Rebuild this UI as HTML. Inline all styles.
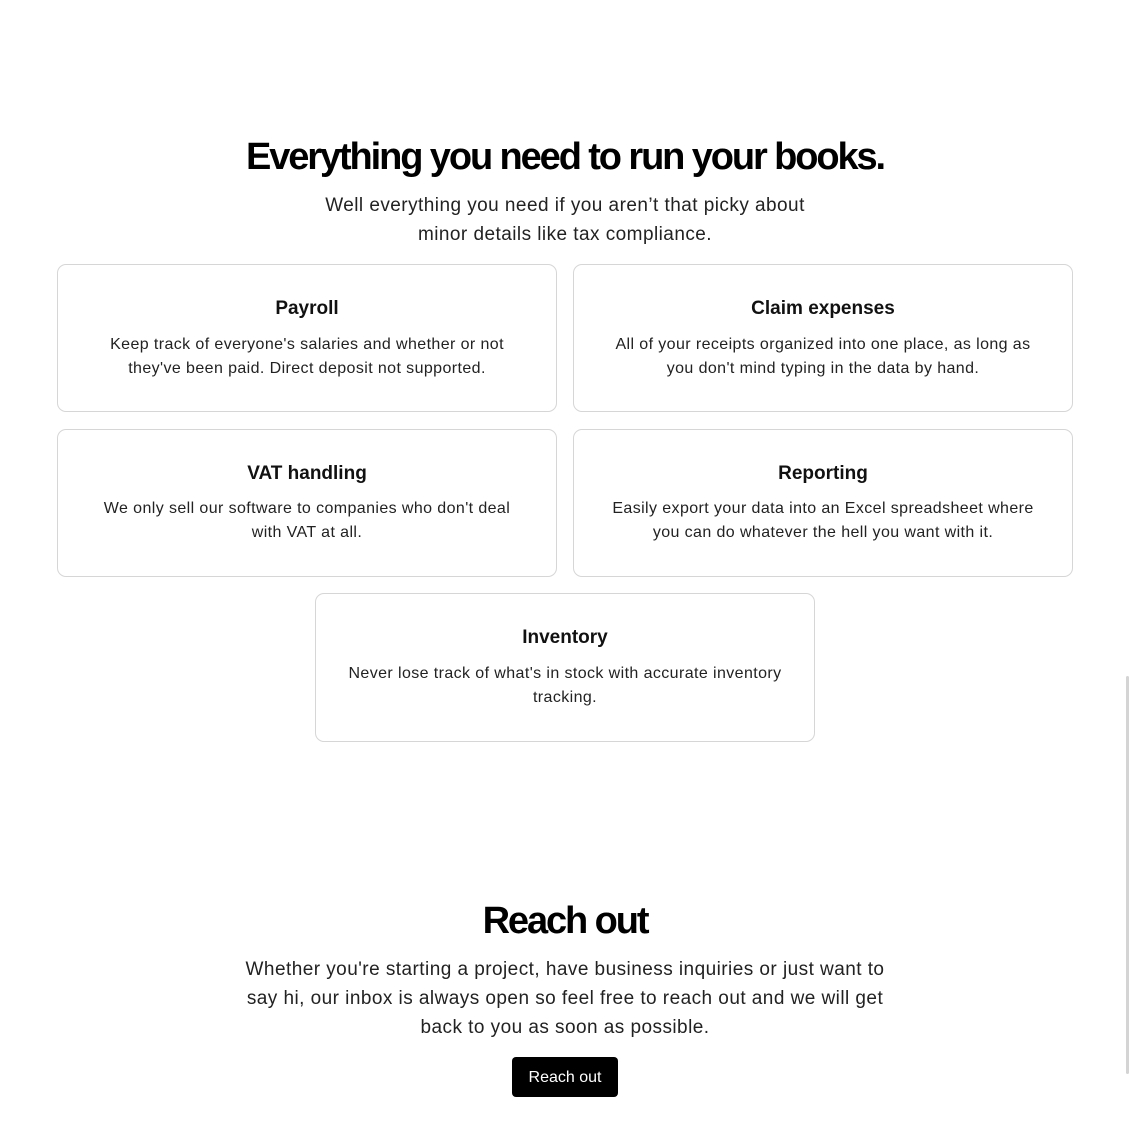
<!DOCTYPE html>
<html><head><meta charset="utf-8"><style>
*{box-sizing:border-box;margin:0;padding:0}
body{width:1130px;height:1130px;background:#fff;font-family:"Liberation Sans",Arial,sans-serif;color:#111;position:relative;overflow:hidden}
.abs{position:absolute;left:0;width:1130px;text-align:center}
h1{font-size:38px;font-weight:700;letter-spacing:-2.1px;color:#000}
.sub{font-size:19px;line-height:29px;color:#222;letter-spacing:0.45px}
.card{position:absolute;width:500px;height:148px;border:1px solid #d6d6d6;border-radius:9px;text-align:center}
.card h3{position:absolute;top:33px;left:0;right:0;font-size:19px;font-weight:700;color:#111}
.card p{position:absolute;top:68px;left:0;right:0;font-size:16px;line-height:24px;color:#222;letter-spacing:0.4px}
.btn{position:absolute;left:512px;top:1057px;width:106px;height:40px;background:#000;color:#fff;border-radius:4px;font-size:16px;line-height:41px;text-align:center}
.sb{position:absolute;left:1126px;top:676px;width:3px;height:398px;background:#d4d4d4;border-radius:2px}
</style></head><body>
<div class="abs" style="top:136px"><h1>Everything you need to run your books.</h1></div>
<div class="abs sub" style="top:191px">Well everything you need if you aren’t that picky about<br>minor details like tax compliance.</div>

<div class="card" style="left:57px;top:264px"><h3>Payroll</h3><p>Keep track of everyone's salaries and whether or not<br>they've been paid. Direct deposit not supported.</p></div>
<div class="card" style="left:573px;top:264px"><h3>Claim expenses</h3><p>All of your receipts organized into one place, as long as<br>you don't mind typing in the data by hand.</p></div>
<div class="card" style="left:57px;top:429px;height:148px"><h3>VAT handling</h3><p style="top:67px">We only sell our software to companies who don't deal<br>with VAT at all.</p></div>
<div class="card" style="left:573px;top:429px;height:148px"><h3>Reporting</h3><p style="top:67px">Easily export your data into an Excel spreadsheet where<br>you can do whatever the hell you want with it.</p></div>
<div class="card" style="left:315px;top:593px;height:149px"><h3>Inventory</h3><p>Never lose track of what's in stock with accurate inventory<br>tracking.</p></div>

<div class="abs" style="top:900px"><h1>Reach out</h1></div>
<div class="abs sub" style="top:955px">Whether you're starting a project, have business inquiries or just want to<br>say hi, our inbox is always open so feel free to reach out and we will get<br>back to you as soon as possible.</div>
<div class="btn">Reach out</div>
<div class="sb"></div>
</body></html>
